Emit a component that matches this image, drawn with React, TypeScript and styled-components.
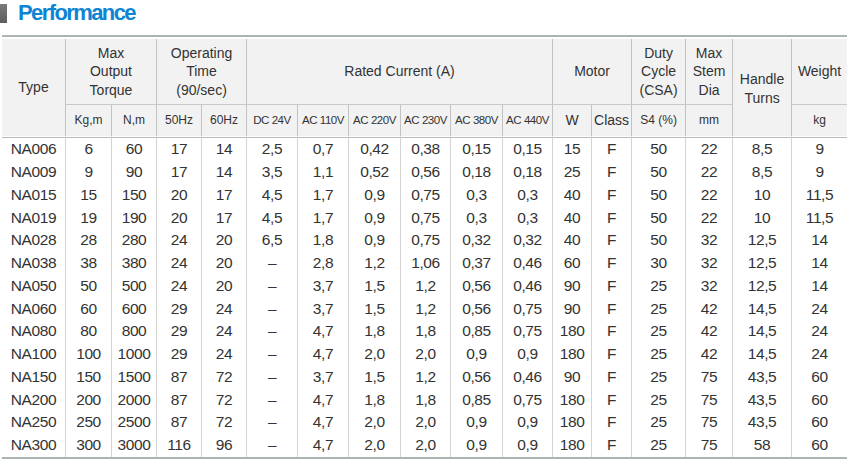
import React from "react";
import styled, { createGlobalStyle } from "styled-components";

const Global = createGlobalStyle`
  html, body { margin: 0; padding: 0; background: #fff; }
  body { font-family: "Liberation Sans", Arial, sans-serif; color: #333; }
`;

const Page = styled.div`
  width: 847px;
  height: 459px;
  overflow: hidden;
  display: flex;
  flex-direction: column;
`;

const TitleRow = styled.div`
  display: flex;
  align-items: center;
  gap: 11px;
  height: 26px;
  margin-bottom: 9px;
`;

const TitleBar = styled.span`
  width: 7px;
  height: 19px;
  margin-top: 1px;
  background: linear-gradient(#7a7a7a, #5e5e5e);
`;

const Title = styled.h2`
  margin: 0;
  font-size: 22px;
  font-weight: 700;
  letter-spacing: -1.6px;
  color: #0d84d4;
  line-height: 26px;
`;

const Frame = styled.div`
  margin-left: 2px;
  border-top: 2px solid #aeb3b6;
  border-bottom: 2px solid #aeb3b6;
  padding-top: 2px;
`;

const Table = styled.table`
  table-layout: fixed;
  width: 845px;
  border-collapse: separate;
  border-spacing: 0;
`;

const Th = styled.th<{ $span?: boolean; $small?: boolean; $last?: boolean; $tiny?: boolean }>`
  background: #f2f2f2;
  font-weight: 400;
  color: #333;
  font-size: ${(p) => (p.$tiny ? "11.5px" : p.$small ? "12px" : "14px")};
  letter-spacing: ${(p) => (p.$tiny ? "-0.45px" : "0")};
  line-height: 18.5px;
  padding: 0;
  text-align: center;
  white-space: nowrap;
  border-right: ${(p) => (p.$last ? "none" : "1px solid #c2c2c2")};
  border-bottom: 1px solid ${(p) => (p.$span ? "#fff" : "#c8c8c8")};
`;

const HeadRow = styled.tr<{ $h: number }>`
  height: ${(p) => p.$h}px;
`;

const SubRow = styled.tr`
  height: 32px;
  & > th {
    border-bottom: 1px solid #fff;
  }
`;

const HandleLabel = styled.div`
  padding-top: 2px;
`;

const Td = styled.td<{ $last?: boolean }>`
  height: 22.75px;
  padding: 0;
  text-align: center;
  font-size: 15.5px;
  letter-spacing: -0.4px;
  color: #333;
  white-space: nowrap;
  border-right: ${(p) => (p.$last ? "none" : "1px solid #d4d4d4")};
  line-height: 22px;
`;

const BodyRow = styled.tr`
  &:first-child > td {
    border-top: 1px solid #b8b8b8;
  }
`;

const widths = [64, 46, 45, 45, 45, 51, 51, 52, 50, 52, 50, 39, 40, 54, 47, 59, 55];

const rows: string[][] = [
  ["NA006", "6", "60", "17", "14", "2,5", "0,7", "0,42", "0,38", "0,15", "0,15", "15", "F", "50", "22", "8,5", "9"],
  ["NA009", "9", "90", "17", "14", "3,5", "1,1", "0,52", "0,56", "0,18", "0,18", "25", "F", "50", "22", "8,5", "9"],
  ["NA015", "15", "150", "20", "17", "4,5", "1,7", "0,9", "0,75", "0,3", "0,3", "40", "F", "50", "22", "10", "11,5"],
  ["NA019", "19", "190", "20", "17", "4,5", "1,7", "0,9", "0,75", "0,3", "0,3", "40", "F", "50", "22", "10", "11,5"],
  ["NA028", "28", "280", "24", "20", "6,5", "1,8", "0,9", "0,75", "0,32", "0,32", "40", "F", "50", "32", "12,5", "14"],
  ["NA038", "38", "380", "24", "20", "–", "2,8", "1,2", "1,06", "0,37", "0,46", "60", "F", "30", "32", "12,5", "14"],
  ["NA050", "50", "500", "24", "20", "–", "3,7", "1,5", "1,2", "0,56", "0,46", "90", "F", "25", "32", "12,5", "14"],
  ["NA060", "60", "600", "29", "24", "–", "3,7", "1,5", "1,2", "0,56", "0,75", "90", "F", "25", "42", "14,5", "24"],
  ["NA080", "80", "800", "29", "24", "–", "4,7", "1,8", "1,8", "0,85", "0,75", "180", "F", "25", "42", "14,5", "24"],
  ["NA100", "100", "1000", "29", "24", "–", "4,7", "2,0", "2,0", "0,9", "0,9", "180", "F", "25", "42", "14,5", "24"],
  ["NA150", "150", "1500", "87", "72", "–", "3,7", "1,5", "1,2", "0,56", "0,46", "90", "F", "25", "75", "43,5", "60"],
  ["NA200", "200", "2000", "87", "72", "–", "4,7", "1,8", "1,8", "0,85", "0,75", "180", "F", "25", "75", "43,5", "60"],
  ["NA250", "250", "2500", "87", "72", "–", "4,7", "2,0", "2,0", "0,9", "0,9", "180", "F", "25", "75", "43,5", "60"],
  ["NA300", "300", "3000", "116", "96", "–", "4,7", "2,0", "2,0", "0,9", "0,9", "180", "F", "25", "75", "58", "60"],
];

const volts = ["DC 24V", "AC 110V", "AC 220V", "AC 230V", "AC 380V", "AC 440V"];

export default function App() {
  return (
    <Page>
      <Global />
      <TitleRow>
        <TitleBar />
        <Title>Performance</Title>
      </TitleRow>
      <Frame>
        <Table>
          <colgroup>
            {widths.map((w, i) => (
              <col key={i} style={{ width: w }} />
            ))}
          </colgroup>
          <thead>
            <HeadRow $h={66}>
              <Th rowSpan={2} $span>Type</Th>
              <Th colSpan={2}>Max<br />Output<br />Torque</Th>
              <Th colSpan={2}>Operating<br />Time<br />(90/sec)</Th>
              <Th colSpan={6}>Rated Current (A)</Th>
              <Th colSpan={2}>Motor</Th>
              <Th>Duty<br />Cycle<br />(CSA)</Th>
              <Th>Max<br />Stem<br />Dia</Th>
              <Th rowSpan={2} $span>
                <HandleLabel>Handle<br />Turns</HandleLabel>
              </Th>
              <Th $last>Weight</Th>
            </HeadRow>
            <SubRow>
              <Th $small>Kg,m</Th>
              <Th $small>N,m</Th>
              <Th $small>50Hz</Th>
              <Th $small>60Hz</Th>
              {volts.map((v) => (
                <Th key={v} $tiny>{v}</Th>
              ))}
              <Th>W</Th>
              <Th>Class</Th>
              <Th $small>S4 (%)</Th>
              <Th $small>mm</Th>
              <Th $small $last>kg</Th>
            </SubRow>
          </thead>
          <tbody>
            {rows.map((r) => (
              <BodyRow key={r[0]}>
                {r.map((c, i) => (
                  <Td key={i} $last={i === r.length - 1}>{c}</Td>
                ))}
              </BodyRow>
            ))}
          </tbody>
        </Table>
      </Frame>
    </Page>
  );
}
